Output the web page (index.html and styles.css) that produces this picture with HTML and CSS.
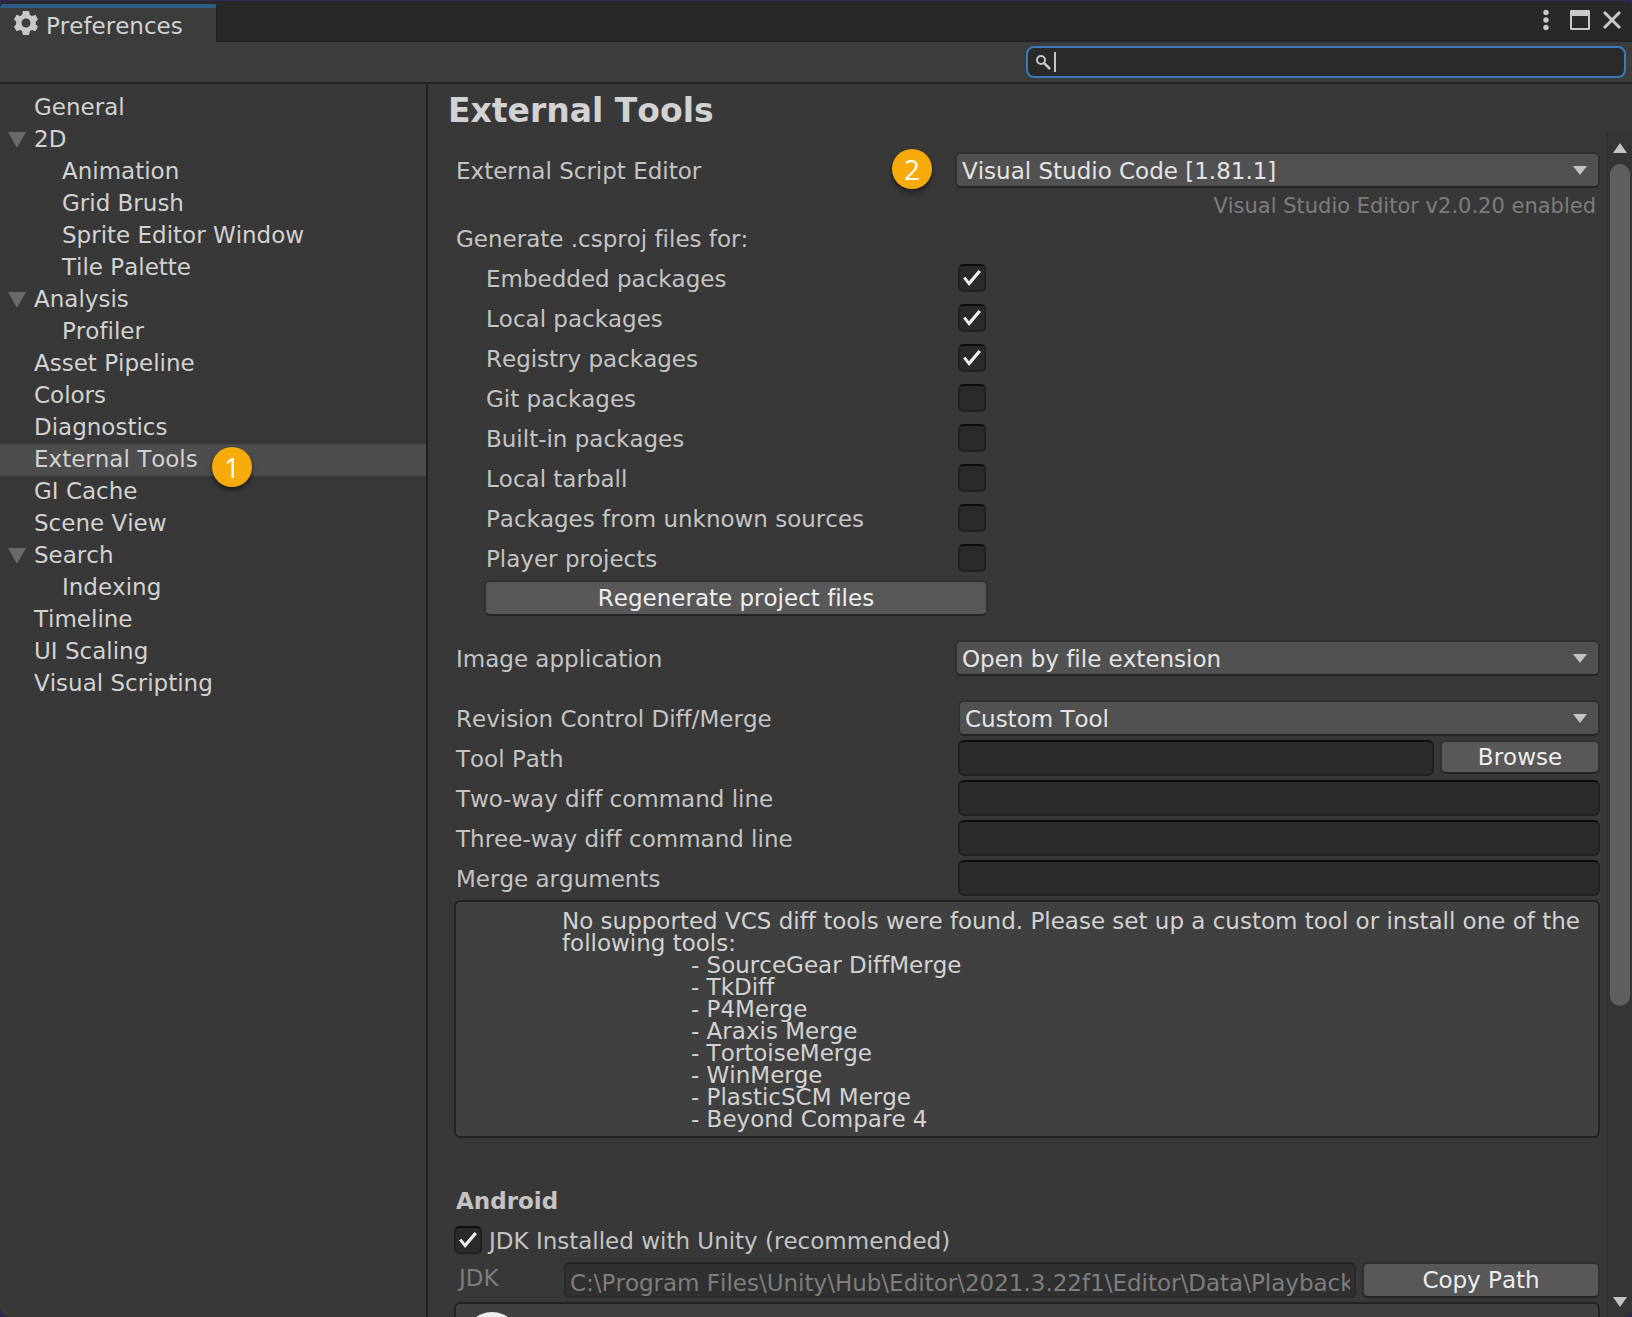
FILE: index.html
```html
<!DOCTYPE html>
<html lang="en">
<head>
<meta charset="utf-8">
<title>Preferences</title>
<link rel="stylesheet" href="styles.css">
</head>
<body>
<div class="window">
  <header class="titlebar">
    <div class="tab">
      <svg class="gear" viewBox="0 0 24 24" aria-hidden="true"><path fill="#c8c8c8" fill-rule="evenodd" d="M9 0h6l1 4 2 1 3.500-1.200 2.500 4.700-2.200 2v3l2.200 2-2.500 4.700-3.500-1.200-2 1-1 4H9l-1-4-2-1-3.500 1.200L0 15.500l2.200-2v-3L0 8.500l2.500-4.700L6 5l2-1zM12 7.500a4.500 4.500 0 1 0 0 9a4.500 4.500 0 1 0 0-9z"/></svg>
      <span>Preferences</span>
    </div>
    <div class="window-buttons">
      <button type="button" aria-label="Menu"><svg width="6" height="22" viewBox="0 0 6 22"><g fill="#c8c8c8"><circle cx="3" cy="3.500" r="2.700"/><circle cx="3" cy="11" r="2.700"/><circle cx="3" cy="18.500" r="2.700"/></g></svg></button>
      <button type="button" aria-label="Maximize"><svg width="20" height="20" viewBox="0 0 20 20"><path fill="#c8c8c8" fill-rule="evenodd" d="M1 0h18l1 1v18l-1 1H1l-1-1V1zM2 6v12h16V6z"/></svg></button>
      <button type="button" aria-label="Close"><svg width="18" height="18" viewBox="0 0 18 18"><path stroke="#c8c8c8" stroke-width="3" d="M1 1l16 16M17 1L1 17"/></svg></button>
    </div>
  </header>
  <div class="toolbar">
    <label class="search">
      <svg width="16" height="16" viewBox="0 0 16 16" aria-hidden="true"><g fill="none" stroke="#c8c8c8" stroke-width="2"><circle cx="5" cy="6" r="4"/><path d="M8 9l6 6" stroke-width="2.500"/></g></svg>
      <span class="caret"></span>
      <input type="text" aria-label="Search preferences">
    </label>
  </div>
  <div class="body">
    <nav class="sidebar">
      <a href="#">General</a>
      <a href="#" class="group">2D</a>
      <a href="#" class="child">Animation</a>
      <a href="#" class="child">Grid Brush</a>
      <a href="#" class="child">Sprite Editor Window</a>
      <a href="#" class="child">Tile Palette</a>
      <a href="#" class="group">Analysis</a>
      <a href="#" class="child">Profiler</a>
      <a href="#">Asset Pipeline</a>
      <a href="#">Colors</a>
      <a href="#">Diagnostics</a>
      <a href="#" class="selected">External Tools<span class="badge badge-nav">1</span></a>
      <a href="#">GI Cache</a>
      <a href="#">Scene View</a>
      <a href="#" class="group">Search</a>
      <a href="#" class="child">Indexing</a>
      <a href="#">Timeline</a>
      <a href="#">UI Scaling</a>
      <a href="#">Visual Scripting</a>
    </nav>
    <main class="main">
      <h1>External Tools</h1>
      <div class="viewport">
        <div class="content">
          <div class="row editor-row">
            <label for="editor">External Script Editor</label>
            <span class="badge badge-editor">2</span>
            <div class="dropdown"><select id="editor"><option>Visual Studio Code [1.81.1]</option></select><svg viewBox="0 0 14 9" aria-hidden="true"><path d="M0 0h14L7 9z"/></svg></div>
          </div>
          <p class="note">Visual Studio Editor v2.0.20 enabled</p>
          <p class="caption">Generate .csproj files for:</p>
          <div class="packages">
            <div class="check-row"><label for="p1">Embedded packages</label><input id="p1" type="checkbox" checked></div>
            <div class="check-row"><label for="p2">Local packages</label><input id="p2" type="checkbox" checked></div>
            <div class="check-row"><label for="p3">Registry packages</label><input id="p3" type="checkbox" checked></div>
            <div class="check-row"><label for="p4">Git packages</label><input id="p4" type="checkbox"></div>
            <div class="check-row"><label for="p5">Built-in packages</label><input id="p5" type="checkbox"></div>
            <div class="check-row"><label for="p6">Local tarball</label><input id="p6" type="checkbox"></div>
            <div class="check-row"><label for="p7">Packages from unknown sources</label><input id="p7" type="checkbox"></div>
            <div class="check-row"><label for="p8">Player projects</label><input id="p8" type="checkbox"></div>
            <button type="button" class="button regenerate">Regenerate project files</button>
          </div>
          <div class="row image-row">
            <label for="image">Image application</label>
            <div class="dropdown"><select id="image"><option>Open by file extension</option></select><svg viewBox="0 0 14 9" aria-hidden="true"><path d="M0 0h14L7 9z"/></svg></div>
          </div>
          <div class="vcs">
            <div class="row">
              <label for="diff">Revision Control Diff/Merge</label>
              <div class="dropdown"><select id="diff"><option>Custom Tool</option></select><svg viewBox="0 0 14 9" aria-hidden="true"><path d="M0 0h14L7 9z"/></svg></div>
            </div>
            <div class="row">
              <label for="path">Tool Path</label>
              <div class="path"><input id="path" class="field" type="text"><button type="button" class="button browse">Browse</button></div>
            </div>
            <div class="row"><label for="two">Two-way diff command line</label><input id="two" class="field" type="text"></div>
            <div class="row"><label for="three">Three-way diff command line</label><input id="three" class="field" type="text"></div>
            <div class="row"><label for="merge">Merge arguments</label><input id="merge" class="field" type="text"></div>
            <div class="help">
              <p>No supported VCS diff tools were found. Please set up a custom tool or install one of the following tools:</p>
              <ul>
                <li>- SourceGear DiffMerge</li>
                <li>- TkDiff</li>
                <li>- P4Merge</li>
                <li>- Araxis Merge</li>
                <li>- TortoiseMerge</li>
                <li>- WinMerge</li>
                <li>- PlasticSCM Merge</li>
                <li>- Beyond Compare 4</li>
              </ul>
            </div>
          </div>
          <h2>Android</h2>
          <div class="jdk-check"><input id="jdk-on" type="checkbox" checked><label for="jdk-on">JDK Installed with Unity (recommended)</label></div>
          <div class="jdk-row">
            <label for="jdk">JDK</label>
            <input id="jdk" class="field" type="text" disabled value="C:\Program Files\Unity\Hub\Editor\2021.3.22f1\Editor\Data\PlaybackEngines\AndroidPlayer\OpenJDK">
            <button type="button" class="button copy">Copy Path</button>
          </div>
          <div class="help info"><svg width="56" height="56" viewBox="0 0 56 56" aria-hidden="true"><circle cx="28" cy="28" r="28" fill="#eee"/></svg></div>
        </div>
        <div class="scrollbar">
          <svg width="14" height="10" viewBox="0 0 14 10" aria-hidden="true"><path d="M0 10h14L7 0z"/></svg>
          <div class="track"><div class="thumb"></div></div>
          <svg width="14" height="10" viewBox="0 0 14 10" aria-hidden="true"><path d="M0 0h14L7 10z"/></svg>
        </div>
      </div>
    </main>
  </div>
</div>
</body>
</html>
```
FILE: styles.css
```css
* { box-sizing: border-box; }

body {
  margin: 0;
  background: #2e2650;
  color: #c4c4c4;
  font: 23px/28px "DejaVu Sans", sans-serif;
  font-kerning: none;
  font-variant-ligatures: none;
}

h1, h2, p, ul { margin: 0; padding: 0; }

button, input, select {
  margin: 0;
  color: inherit;
  font: inherit;
  font-kerning: none;
  font-variant-ligatures: none;
}

.window {
  display: flex;
  flex-direction: column;
  height: 100vh;
  overflow: hidden;
  background: #383838;
  border-top: 1px solid #35295c;
  border-radius: 9px;
}

/* Title bar */
.titlebar {
  display: flex;
  justify-content: space-between;
  height: 41px;
  background: #282828;
  box-shadow: inset 0 -2px #232323;
}

.tab {
  display: flex;
  align-items: center;
  gap: 8px;
  width: 217px;
  height: 38px;
  margin-top: 3px;
  padding: 2px 14px 0;
  background: #3c3c3c;
  border-top: 4px solid #2c5d87;
  border-right: 1px solid #232323;
  border-radius: 3px 3px 0 0;
  color: #d2d2d2;
}

.gear { width: 24px; height: 24px; margin-bottom: 6px; }

.window-buttons {
  display: flex;
  align-items: center;
  gap: 13px;
  padding: 0 11px 4px 0;
}

.window-buttons button {
  display: flex;
  padding: 0;
  background: none;
  border: 0;
}

.window-buttons button:first-child { margin-right: 8px; }

/* Search toolbar */
.toolbar {
  display: flex;
  justify-content: flex-end;
  height: 42px;
  padding: 4px 6px 0 0;
  background: #3c3c3c;
  border-bottom: 2px solid #232323;
}

.search {
  display: flex;
  align-items: center;
  width: 600px;
  height: 32px;
  padding-left: 8px;
  background: #2a2a2a;
  border: 2px solid #3a79bb;
  border-radius: 8px;
}

.search .caret { width: 2px; height: 20px; margin-left: 2px; background: #c4c4c4; }

.search input { flex: 1; min-width: 0; padding: 0; background: none; border: 0; outline: 0; }

.body { display: flex; flex: 1; min-height: 0; }

/* Sidebar */
.sidebar {
  flex: 0 0 428px;
  padding-top: 8px;
  border-right: 2px solid #202020;
}

.sidebar a {
  display: flex;
  align-items: center;
  height: 32px;
  padding: 0 0 2px 34px;
  color: #d2d2d2;
  text-decoration: none;
}

.sidebar .child { padding-left: 62px; }

.sidebar .group { padding-left: 8px; }

.sidebar .group::before {
  content: "";
  width: 18px;
  height: 16px;
  margin: 2px 8px 0 0;
  background: #6a6a6a;
  clip-path: polygon(0 0, 100% 0, 50% 100%);
}

.sidebar .selected { position: relative; background: #4d4d4d; }

.badge {
  position: absolute;
  width: 40px;
  height: 40px;
  background: #f7ab0a;
  border-radius: 50%;
  box-shadow: 0 3px 5px rgba(0, 0, 0, 0.5);
  color: #fff;
  font: 28px/40px "Open Sans", sans-serif;
  text-align: center;
}

.badge-nav { left: 212px; top: 3px; }
.badge-editor { left: 438px; top: -3px; }

/* Settings pane */
.main { display: flex; flex: 1; flex-direction: column; min-width: 0; }

h1 {
  height: 48px;
  padding-left: 20px;
  color: #d2d2d2;
  font-size: 33px;
  line-height: 54px;
}

.viewport { display: flex; flex: 1; min-height: 0; }

.content {
  flex: 1;
  min-width: 0;
  padding: 20px 6px 0 26px;
  overflow: hidden;
}

.row { display: grid; grid-template-columns: 501px 1fr; align-items: center; }

.row label, .check-row label, .jdk-check label { padding: 2px 0 0 2px; }

.editor-row { position: relative; }

.dropdown { display: grid; align-items: center; }

.dropdown select, .dropdown svg { grid-area: 1 / 1; }

.dropdown select {
  width: 100%;
  height: 36px;
  padding: 2px 32px 0 5px;
  background: #515151;
  border: 2px solid #303030;
  border-bottom-color: #242424;
  border-radius: 6px;
  outline: 0;
  appearance: none;
  color: #e4e4e4;
}

.dropdown svg {
  justify-self: end;
  width: 16px;
  height: 9px;
  margin-right: 12px;
  fill: #c4c4c4;
  pointer-events: none;
}

.note {
  height: 30px;
  padding: 4px 4px 0 0;
  color: #7e7e7e;
  font-size: 21px;
  text-align: right;
}

.caption { height: 40px; padding-left: 2px; line-height: 42px; }

.packages { padding-left: 30px; }

.check-row { display: grid; grid-template-columns: 474px 1fr; align-items: center; height: 40px; }

input[type="checkbox"] {
  width: 28px;
  height: 28px;
  background: #2a2a2a;
  border: 2px solid #212121;
  border-top-color: #0d0d0d;
  border-radius: 5px;
  appearance: none;
}

input[type="checkbox"]:checked::before {
  content: "";
  display: block;
  width: 18px;
  height: 16px;
  margin: 4px 3px;
  background: #eee;
  clip-path: polygon(0 52%, 14% 42%, 33% 70%, 86% 0, 100% 12%, 34% 100%);
}

.button {
  height: 36px;
  padding: 0;
  background: #585858;
  border: 2px solid #303030;
  border-bottom-color: #242424;
  border-radius: 6px;
  color: #eee;
}

.regenerate { display: block; width: 504px; margin: 2px 0 24px; }

.image-row { margin-bottom: 24px; }

.vcs { display: grid; gap: 4px; }

.vcs .row { grid-template-columns: 504px 1fr; }

.field {
  width: 100%;
  min-width: 0;
  height: 36px;
  padding: 2px 4px 0;
  background: #2a2a2a;
  border: 2px solid #212121;
  border-top-color: #0d0d0d;
  border-radius: 6px;
  outline: 0;
}

.path { display: flex; gap: 6px; }

.path .field { flex: 1; }

.browse { flex: 0 0 160px; height: 34px; }

.help {
  padding: 8px 10px 6px 106px;
  background: #404040;
  border: 2px solid #232323;
  border-radius: 6px;
  color: #d2d2d2;
  line-height: 22px;
}

.help ul { padding-left: 129px; list-style: none; }

h2 {
  margin-top: 42px;
  padding-left: 2px;
  font-size: 23px;
  line-height: 42px;
}

.jdk-check { display: flex; align-items: center; gap: 5px; height: 36px; }

.jdk-row { display: flex; gap: 6px; margin: 4px 0; color: #7e7e7e; }

.jdk-row label { flex: 0 0 104px; padding: 2px 0 0 5px; }

.jdk-row .field { flex: 1; padding-top: 6px; background: #303030; border-color: #2a2a2a; border-top-color: #212121; }

.copy { flex: 0 0 238px; }

.info { height: 120px; padding: 8px; }

/* Scrollbar */
.scrollbar {
  display: flex;
  flex: 0 0 26px;
  flex-direction: column;
  align-items: center;
  padding: 11px 0 10px;
  background: #353535;
  border-left: 2px solid #303030;
}

.scrollbar svg { fill: #c4c4c4; }

.track { flex: 1; width: 20px; padding: 11px 0; }

.thumb { height: 75%; background: #5f5f5f; border-radius: 10px; }
```
